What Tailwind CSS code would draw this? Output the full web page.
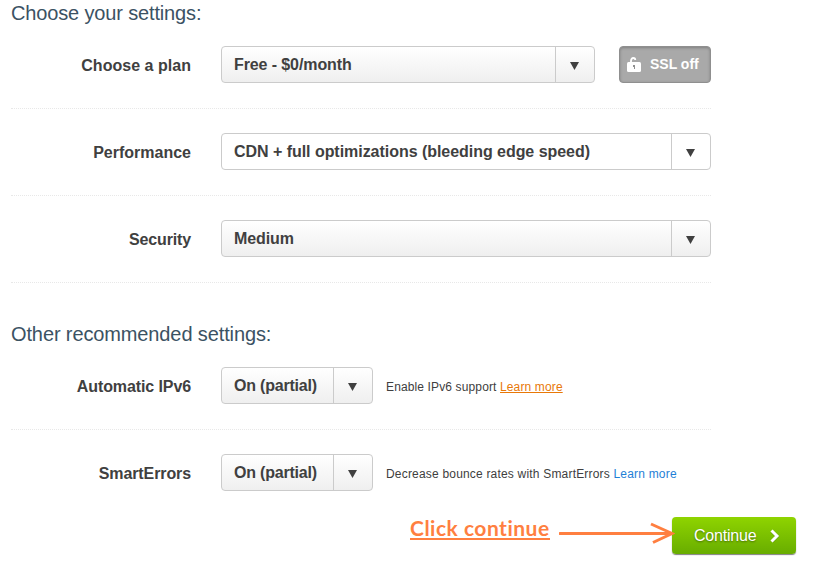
<!DOCTYPE html>
<html lang="en">
  <head>
    <meta charset="UTF-8" />
    <meta name="viewport" content="width=device-width, initial-scale=1.0" />
    <title>Choose your settings</title>
    <script src="https://cdn.jsdelivr.net/npm/@tailwindcss/browser@4"></script>
  </head>
  <body
    class="h-[575px] overflow-hidden bg-white font-['Liberation_Sans',Arial,sans-serif] text-[#404040]"
  >
    <main class="pl-[11px]">
      <section class="w-[700px]">
        <h2 class="h-[22px] pt-px text-xl leading-6 tracking-[-0.15px] text-[#3b5263]">
          Choose your settings:
        </h2>

        <div class="flex h-[87px] items-start border-b border-dotted border-[#e8e8e8] pt-6">
          <label class="w-[180px] text-right leading-[39px] font-bold tracking-[0.03px]">Choose a plan</label>
          <button
            class="ml-[30px] flex h-[37px] w-[374px] rounded border border-[#cbcbcb] bg-linear-to-b from-white to-[#efefef] font-bold"
          >
            <span class="grow pl-3 text-left leading-[35px] tracking-[-0.1px]">Free - $0/month</span>
            <span class="flex h-full w-[39px] items-center justify-center border-l border-[#cbcbcb] pr-px">
              <svg class="mt-0.5 h-2 w-[9px]" viewBox="0 0 9 8" fill="#404040">
                <path d="M0 0h9L4.5 8z" />
              </svg>
            </span>
          </button>
          <button
            class="ml-6 flex h-[37px] w-[92px] items-center rounded border border-[#8f8f8f] bg-[#a9a9a9] pl-[7px] text-sm font-bold text-white shadow-[inset_0_1px_3px_rgba(0,0,0,0.25)]"
          >
            <svg class="h-[15px] w-[14px]" viewBox="0 0 14 15">
              <path d="M4 6V4C4 2 5 1 6.3 1S8.3 1.8 8.3 3" fill="none" stroke="#fff" stroke-width="1.8" />
              <rect y="5" width="14" height="10" rx="1.5" fill="#fff" />
              <path d="M6 8h2v4H7V10H6z" fill="#8f8f8f" />
            </svg>
            <span class="-mt-0.5 ml-[9px]">SSL off</span>
          </button>
        </div>

        <div class="flex h-[87px] items-start border-b border-dotted border-[#e8e8e8] pt-6">
          <label class="w-[180px] text-right leading-[39px] font-bold">Performance</label>
          <button
            class="ml-[30px] flex h-[37px] w-[490px] rounded border border-[#cbcbcb] bg-white font-bold"
          >
            <span class="grow pl-3 text-left leading-[35px] tracking-[-0.04px]"
              >CDN + full optimizations (bleeding edge speed)</span
            >
            <span class="flex h-full w-[39px] items-center justify-center border-l border-[#cbcbcb] pr-px">
              <svg class="mt-0.5 h-2 w-[9px]" viewBox="0 0 9 8" fill="#404040">
                <path d="M0 0h9L4.5 8z" />
              </svg>
            </span>
          </button>
        </div>

        <div class="flex h-[87px] items-start border-b border-dotted border-[#e8e8e8] pt-6">
          <label class="w-[180px] text-right leading-[39px] font-bold tracking-[-0.15px]">Security</label>
          <button
            class="ml-[30px] flex h-[37px] w-[490px] rounded border border-[#cbcbcb] bg-linear-to-b from-white to-[#efefef] font-bold"
          >
            <span class="grow pl-3 text-left leading-[35px] tracking-[-0.1px]">Medium</span>
            <span class="flex h-full w-[39px] items-center justify-center border-l border-[#cbcbcb] pr-px">
              <svg class="mt-0.5 h-2 w-[9px]" viewBox="0 0 9 8" fill="#404040">
                <path d="M0 0h9L4.5 8z" />
              </svg>
            </span>
          </button>
        </div>
      </section>

      <section class="w-[700px]">
        <h2 class="h-[60px] pt-[39px] text-xl leading-6 tracking-[-0.12px] text-[#3b5263]">
          Other recommended settings:
        </h2>

        <div class="flex h-[87px] items-start border-b border-dotted border-[#e8e8e8] pt-6">
          <label class="w-[180px] text-right leading-[39px] font-bold tracking-[-0.1px]">Automatic IPv6</label>
          <button
            class="ml-[30px] flex h-[37px] w-[152px] rounded border border-[#cbcbcb] bg-linear-to-b from-white to-[#efefef] font-bold"
          >
            <span class="grow pl-3 text-left leading-[35px] tracking-[-0.2px]">On (partial)</span>
            <span class="flex h-full w-[39px] items-center justify-center border-l border-[#cbcbcb] pr-px">
              <svg class="mt-0.5 h-2 w-[9px]" viewBox="0 0 9 8" fill="#404040">
                <path d="M0 0h9L4.5 8z" />
              </svg>
            </span>
          </button>
          <p class="ml-[13px] text-xs leading-[41px] tracking-[0.13px]">
            Enable IPv6 support
            <a href="#" class="text-[#e87808] underline">Learn more</a>
          </p>
        </div>

        <div class="flex h-[87px] items-start pt-6">
          <label class="w-[180px] text-right leading-[39px] font-bold tracking-[-0.1px]">SmartErrors</label>
          <button
            class="ml-[30px] flex h-[37px] w-[152px] rounded border border-[#cbcbcb] bg-linear-to-b from-white to-[#efefef] font-bold"
          >
            <span class="grow pl-3 text-left leading-[35px] tracking-[-0.2px]">On (partial)</span>
            <span class="flex h-full w-[39px] items-center justify-center border-l border-[#cbcbcb] pr-px">
              <svg class="mt-0.5 h-2 w-[9px]" viewBox="0 0 9 8" fill="#404040">
                <path d="M0 0h9L4.5 8z" />
              </svg>
            </span>
          </button>
          <p class="ml-[13px] text-xs leading-[41px] tracking-[0.19px]">
            Decrease bounce rates with SmartErrors
            <a href="#" class="text-[#1f7fd6]">Learn more</a>
          </p>
        </div>
      </section>

      <!-- Call to action -->
      <div class="flex pl-[399px]">
        <span
          class="h-[23px] w-[140px] border-b-2 border-[#ff7f40] font-[Lato,sans-serif] text-[21px] leading-[21px] font-bold tracking-[0.5px] whitespace-nowrap text-[#ff7f40]"
          >Click continue</span
        >
        <svg class="z-10 -mr-[3px] ml-[9px] h-[38px] w-[116px]" viewBox="0 0 116 38" fill="none" stroke="#ff7f40" stroke-width="3">
          <path d="M1 16.5H112" stroke-linecap="round" />
          <path d="M92 7l21 9.5-19 9" />
        </svg>
        <button
          class="flex h-[37px] w-[124px] items-center rounded bg-linear-to-b from-[#8fd400] to-[#68ad00] pl-[22px] tracking-[-0.2px] text-white shadow-[0_1px_1px_rgba(0,0,0,0.5)] text-shadow-[0_1px_2px_rgba(0,0,0,0.4)]"
        >
          Continue
          <svg class="ml-[14px] h-[14px] w-[10px]" viewBox="0 0 10 14" fill="none" stroke-width="3">
            <path d="M2 2.5l5 5-5 5" stroke="#4c8400" />
            <path d="M1.5 1.5l5.5 5.5-5.5 5.5" stroke="#fff" />
          </svg>
        </button>
      </div>
    </main>
  </body>
</html>
